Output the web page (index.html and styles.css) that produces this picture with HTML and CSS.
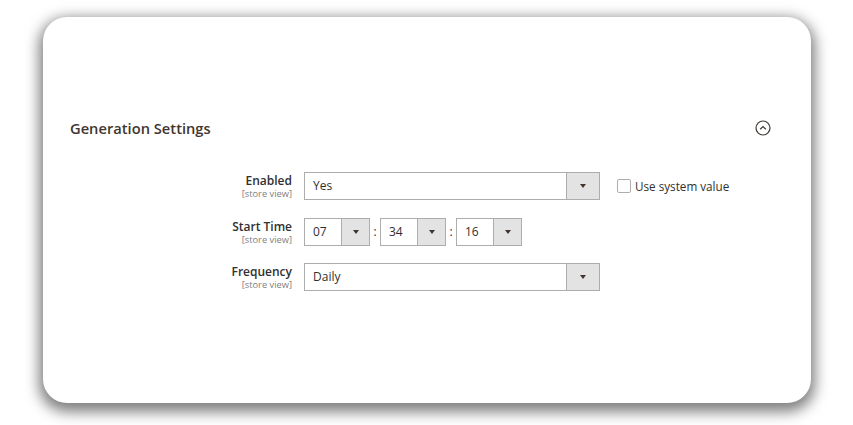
FILE: index.html
```html
<!DOCTYPE html>
<html lang="en">
<head>
    <meta charset="UTF-8">
    <meta name="viewport" content="width=device-width, initial-scale=1.0">
    <title>Generation Settings</title>
    <link rel="stylesheet" href="styles.css">
</head>
<body>
    <div class="card">
        <div class="section-head">
            <h2>Generation Settings</h2>
            <svg class="toggle" width="16" height="16" viewBox="0 0 16 16">
                <circle cx="8" cy="8" r="7" fill="none" stroke="#41362f" stroke-width="1.2"/>
                <path d="M5.2 9.2 L8 6.6 L10.8 9.2" fill="none" stroke="#41362f" stroke-width="1.2"/>
            </svg>
        </div>

        <div class="form">
            <div class="label">
                <span class="name">Enabled</span>
                <span class="scope">[store view]</span>
            </div>
            <div class="field">
                <div class="select wide">
                    <span class="value">Yes</span>
                    <span class="arrow"></span>
                </div>
                <label class="system">
                    <span class="checkbox"></span>
                    Use system value
                </label>
            </div>

            <div class="label">
                <span class="name">Start Time</span>
                <span class="scope">[store view]</span>
            </div>
            <div class="field time">
                <div class="select small">
                    <span class="value">07</span>
                    <span class="arrow"></span>
                </div>
                <span class="colon">:</span>
                <div class="select small">
                    <span class="value">34</span>
                    <span class="arrow"></span>
                </div>
                <span class="colon">:</span>
                <div class="select small">
                    <span class="value">16</span>
                    <span class="arrow"></span>
                </div>
            </div>

            <div class="label">
                <span class="name">Frequency</span>
                <span class="scope">[store view]</span>
            </div>
            <div class="field">
                <div class="select wide">
                    <span class="value">Daily</span>
                    <span class="arrow"></span>
                </div>
            </div>
        </div>
    </div>
</body>
</html>
```

FILE: styles.css
```css
body {
    margin: 0;
    padding: 17px 42px 22px 43px;
    background: #fff;
    font-family: "Open Sans", Arial, sans-serif;
    color: #303030;
}
.card {
    height: 386px;
    box-sizing: border-box;
    background: #fff;
    border-radius: 24px;
    box-shadow: 0 5px 14px 4px rgba(0, 0, 0, 0.5);
    padding: 101px 40px 0 27px;
}
.section-head {
    display: flex;
    align-items: center;
    justify-content: space-between;
    height: 20px;
}
.section-head h2 {
    margin: 0;
    font-size: 14.7px;
    font-weight: 600;
    color: #41362f;
}
.toggle {
    display: block;
}
.form {
    display: grid;
    grid-template-columns: 222px auto;
    column-gap: 12px;
    row-gap: 17.5px;
    margin-top: 34px;
}
.label {
    display: flex;
    flex-direction: column;
    align-items: flex-end;
    gap: 1px;
    padding-top: 2px;
    height: 28px;
    box-sizing: border-box;
}
.label .name {
    font-size: 12px;
    font-weight: 600;
    line-height: 13px;
    color: #303030;
}
.label .scope {
    font-size: 9.3px;
    line-height: 12px;
    color: #808080;
}
.field {
    display: flex;
    align-items: center;
}
.select {
    display: flex;
    height: 28px;
    box-sizing: border-box;
    border: 1px solid #adadad;
    background: #fff;
}
.select .value {
    flex: 1;
    padding-left: 8px;
    font-size: 12px;
    line-height: 26px;
    color: #303030;
}
.select .arrow {
    position: relative;
    border-left: 1px solid #adadad;
    background: #e3e3e3;
}
.select .arrow::after {
    content: "";
    position: absolute;
    left: 50%;
    top: 50%;
    margin: -2px 0 0 -3px;
    border-left: 3px solid transparent;
    border-right: 3px solid transparent;
    border-top: 4px solid #41362f;
}
.select.wide {
    width: 296px;
}
.select.wide .arrow {
    width: 32px;
}
.select.small {
    width: 66px;
}
.select.small .arrow {
    width: 27px;
}
.colon {
    width: 10px;
    text-align: center;
    font-size: 12px;
    color: #303030;
}
.system {
    display: flex;
    align-items: center;
    margin-left: 17px;
    font-size: 11.7px;
    color: #303030;
}
.checkbox {
    width: 14px;
    height: 14px;
    box-sizing: border-box;
    border: 1px solid #adadad;
    border-radius: 2px;
    margin-right: 4px;
    background: #fff;
}
```
